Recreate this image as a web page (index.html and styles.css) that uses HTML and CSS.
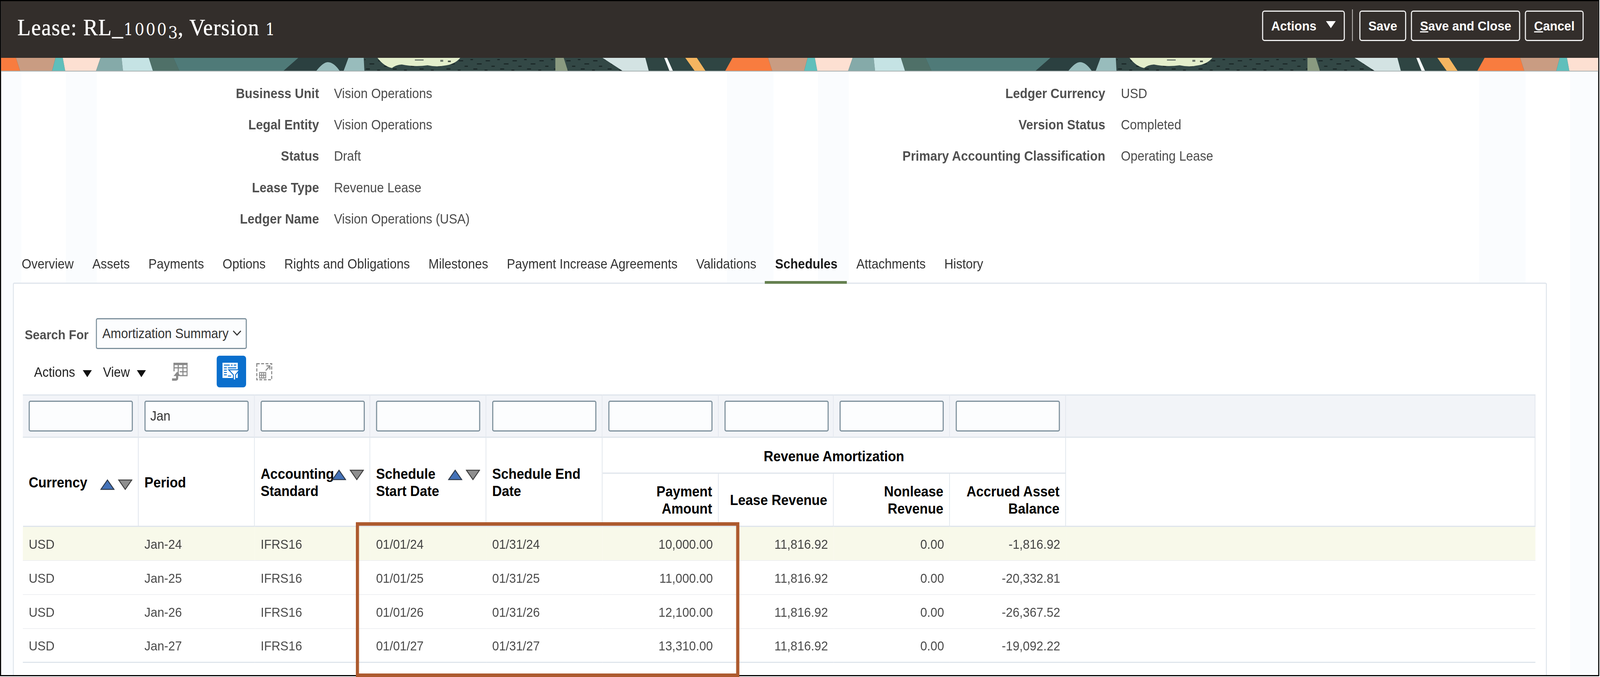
FILE: index.html
```html
<!DOCTYPE html>
<html lang="en">
<head>
<meta charset="utf-8">
<title>Lease: RL_10003, Version 1</title>
<link rel="stylesheet" href="styles.css">
</head>
<body>
<div class="page">
<div class="frame">
  <header class="topbar">
    <h1 class="title">Lease: RL_<span class="os">1000</span><span class="os low">3</span>, Version <span class="os">1</span></h1>
    <div class="topactions">
      <button class="tbtn" type="button">Actions
        <svg class="tbtn-tri" viewBox="0 0 27 18"><polygon points="0,0 27,0 13.5,18"/></svg>
      </button>
      <span class="tsep"></span>
      <button class="tbtn" type="button">Save</button>
      <button class="tbtn" type="button"><u>S</u>ave and Close</button>
      <button class="tbtn" type="button"><u>C</u>ancel</button>
    </div>
  </header>

  <svg class="banner" viewBox="3 148 4400 35" preserveAspectRatio="none">
    <defs>
      <pattern id="speck" patternUnits="userSpaceOnUse" width="74" height="35" x="0" y="148">
        <rect x="6" y="6" width="12" height="3" fill="#1b2828"/>
        <rect x="38" y="3" width="7" height="3" fill="#1b2828"/>
        <rect x="56" y="14" width="13" height="3" fill="#1b2828"/>
        <rect x="22" y="20" width="9" height="3" fill="#1b2828"/>
        <rect x="46" y="27" width="11" height="3" fill="#1b2828"/>
        <rect x="3" y="30" width="8" height="3" fill="#1b2828"/>
      </pattern>
      <g id="tile">
        <rect x="3076" y="148" width="890" height="35" fill="url(#speck)"/>
        <polygon points="2018,148 2116,148 2128,183 1997,183" fill="#f87c3f"/>
        <polygon points="2116,148 2225,148 2215,183 2128,183" fill="#c99c82"/>
        <polygon points="2225,148 2245,148 2252,183 2215,183" fill="#5fbfbb"/>
        <polygon points="2245,148 2349,148 2336,183 2252,183" fill="#fde0d2"/>
        <polygon points="2349,148 2407,148 2411,183 2336,183" fill="#85aaa9"/>
        <polygon points="2407,148 2482,148 2494,183 2411,183" fill="#c5e3e4"/>
        <polygon points="2482,148 2550,148 2567,183 2494,183" fill="#4f7068"/>
        <polygon points="2550,148 2894,148 2851,183 2567,183" fill="#4f7a78"/>
        <polygon points="2894,148 3032,148 3018,183 2851,183" fill="#2b4040"/>
        <path d="M2942 183 Q2962 159 2975 159 Q2992 159 3009 183Z" fill="#98bcbc"/>
        <polygon points="3032,148 3074,148 3076,183 3018,183" fill="#98bcbc"/>
        <path d="M3112 148 Q3130 170 3152 174 Q3162 166 3179 165 Q3215 172 3250 167 Q3275 172 3295 168 Q3325 165 3340 148Z" fill="#e3eecb"/>
        <rect x="3215" y="152" width="24" height="3" fill="#6e7a6e"/>
        <rect x="3285" y="153" width="8" height="5" fill="#6e7a6e"/>
        <rect x="3306" y="155" width="8" height="4" fill="#4d574d"/>
        <polygon points="3602,148 3625,148 3637,183 3602,183" fill="#8a9a80"/>
        <polygon points="3732,148 3850,148 3860,183 3790,183" fill="#d3e3e3"/>
        <polygon points="3850,148 3902,148 3917,183 3860,183" fill="#2f4543"/>
        <polygon points="3902,148 3910,148 3927,183 3917,183" fill="#f2f6f6"/>
        <polygon points="3910,148 3960,148 3987,183 3927,183" fill="#2f4543"/>
        <polygon points="3960,148 3992,148 4017,183 3987,183" fill="#f5b560"/>
        <polygon points="3992,148 4090,148 4069,183 4017,183" fill="#2f4543"/>
      </g>
    </defs>
    <rect x="0" y="148" width="4408" height="35" fill="#334846"/>
    <use href="#tile" x="-2072"/>
    <use href="#tile"/>
    <use href="#tile" x="2072"/>
    <rect x="0" y="181" width="4408" height="2" fill="#a9b2b2"/>
  </svg>

  <section class="details">
    <dl class="fields fields-left">
      <dt>Business Unit</dt><dd>Vision Operations</dd>
      <dt>Legal Entity</dt><dd>Vision Operations</dd>
      <dt>Status</dt><dd>Draft</dd>
      <dt>Lease Type</dt><dd>Revenue Lease</dd>
      <dt>Ledger Name</dt><dd>Vision Operations (USA)</dd>
    </dl>
    <dl class="fields fields-right">
      <dt>Ledger Currency</dt><dd>USD</dd>
      <dt>Version Status</dt><dd>Completed</dd>
      <dt>Primary Accounting Classification</dt><dd>Operating Lease</dd>
    </dl>
  </section>

  <nav class="tabs">
    <a class="tab">Overview</a>
    <a class="tab">Assets</a>
    <a class="tab">Payments</a>
    <a class="tab">Options</a>
    <a class="tab">Rights and Obligations</a>
    <a class="tab">Milestones</a>
    <a class="tab">Payment Increase Agreements</a>
    <a class="tab">Validations</a>
    <a class="tab tab-active">Schedules</a>
    <a class="tab">Attachments</a>
    <a class="tab">History</a>
  </nav>

  <main class="panel">
    <div class="searchrow">
      <span class="searchlabel">Search For</span>
      <div class="selectbox">Amortization Summary
        <svg class="chev" viewBox="0 0 24 14"><polyline points="1.5,1.5 12,12 22.5,1.5"/></svg>
      </div>
    </div>

    <div class="toolbar">
      <span class="tool-menu">Actions</span>
      <svg class="tool-tri" viewBox="0 0 25 18"><polygon points="0,0 25,0 12.5,18"/></svg>
      <span class="tool-menu tool-view">View</span>
      <svg class="tool-tri tool-tri-view" viewBox="0 0 25 18"><polygon points="0,0 25,0 12.5,18"/></svg>

      <svg class="ico-freeze" viewBox="0 0 44 46">
        <rect x="5" y="0" width="39" height="6" fill="#8a8a8a"/>
        <path d="M6.5 0V22M18 0V33M31 0V33M42.5 0V33M5 13H44M22 23H44M22 33H44" fill="none" stroke="#8a8a8a" stroke-width="3"/>
        <path d="M1 43H11Q15 43 15 39V32" fill="none" stroke="#8a8a8a" stroke-width="6"/>
        <polygon points="15,23 25,34 5,34" fill="#8a8a8a"/>
      </svg>

      <button class="filterbtn" type="button" aria-label="Query by example">
        <svg viewBox="0 0 81 81">
          <rect x="16" y="18" width="42" height="39" fill="#fff"/>
          <path d="M20 24H36M39 24H44M47 24H54M20 31H28M31 31H54M20 37H28M20 43H28M20 49H28M31 52H40" stroke="#0a6fcd" stroke-width="2.5" fill="none"/>
          <polygon points="33,36 63,36 52,49 52,62 46,62 46,49" fill="#fff" stroke="#0a6fcd" stroke-width="2.5"/>
        </svg>
      </button>

      <svg class="ico-detach" viewBox="0 0 44 44">
        <rect x="1.5" y="1.5" width="41" height="41" fill="none" stroke="#8e8e8e" stroke-width="3" stroke-dasharray="8 4"/>
        <path d="M9 24H26V38H9ZM15 24V38M20.5 24V38M9 31H26" fill="none" stroke="#8e8e8e" stroke-width="2.5"/>
        <path d="M26 19L37 8M28 7H37.5V16.5" fill="none" stroke="#8e8e8e" stroke-width="3"/>
      </svg>
    </div>

    <table class="grid">
      <colgroup>
        <col class="c319"><col class="c320"><col class="c318"><col class="c320"><col class="c320"><col class="c320"><col class="c317"><col class="c320"><col class="c320"><col>
      </colgroup>
      <thead>
        <tr class="filters">
          <td><input type="text" aria-label="Currency"></td>
          <td><input type="text" aria-label="Period" value="Jan"></td>
          <td><input type="text" aria-label="Accounting Standard"></td>
          <td><input type="text" aria-label="Schedule Start Date"></td>
          <td><input type="text" aria-label="Schedule End Date"></td>
          <td><input type="text" aria-label="Payment Amount"></td>
          <td><input type="text" aria-label="Lease Revenue"></td>
          <td><input type="text" aria-label="Nonlease Revenue"></td>
          <td><input type="text" aria-label="Accrued Asset Balance"></td>
          <td class="filler"></td>
        </tr>
        <tr class="head1">
          <th rowspan="2">Currency
            <span class="sort sort-mid">
              <svg viewBox="0 0 40 28"><polygon class="up" points="20,2 38,26 2,26"/></svg>
              <svg viewBox="0 0 40 28"><polygon class="down" points="2,2 38,2 20,26"/></svg>
            </span>
          </th>
          <th rowspan="2">Period</th>
          <th rowspan="2">Accounting<br>Standard
            <span class="sort sort-high">
              <svg viewBox="0 0 40 28"><polygon class="up" points="20,2 38,26 2,26"/></svg>
              <svg viewBox="0 0 40 28"><polygon class="down" points="2,2 38,2 20,26"/></svg>
            </span>
          </th>
          <th rowspan="2">Schedule<br>Start Date
            <span class="sort sort-high">
              <svg viewBox="0 0 40 28"><polygon class="up" points="20,2 38,26 2,26"/></svg>
              <svg viewBox="0 0 40 28"><polygon class="down" points="2,2 38,2 20,26"/></svg>
            </span>
          </th>
          <th rowspan="2">Schedule End<br>Date</th>
          <th colspan="4" class="group">Revenue Amortization</th>
          <th rowspan="2" class="filler-head"></th>
        </tr>
        <tr class="head2">
          <th class="num">Payment<br>Amount</th>
          <th class="num">Lease Revenue</th>
          <th class="num">Nonlease<br>Revenue</th>
          <th class="num">Accrued Asset<br>Balance</th>
        </tr>
      </thead>
      <tbody>
        <tr class="row-current">
          <td>USD</td><td>Jan-24</td><td>IFRS16</td><td>01/01/24</td><td>01/31/24</td>
          <td class="num">10,000.00</td><td class="num">11,816.92</td><td class="num">0.00</td><td class="num">-1,816.92</td><td></td>
        </tr>
        <tr>
          <td>USD</td><td>Jan-25</td><td>IFRS16</td><td>01/01/25</td><td>01/31/25</td>
          <td class="num">11,000.00</td><td class="num">11,816.92</td><td class="num">0.00</td><td class="num">-20,332.81</td><td></td>
        </tr>
        <tr>
          <td>USD</td><td>Jan-26</td><td>IFRS16</td><td>01/01/26</td><td>01/31/26</td>
          <td class="num">12,100.00</td><td class="num">11,816.92</td><td class="num">0.00</td><td class="num">-26,367.52</td><td></td>
        </tr>
        <tr class="row-last">
          <td>USD</td><td>Jan-27</td><td>IFRS16</td><td>01/01/27</td><td>01/31/27</td>
          <td class="num">13,310.00</td><td class="num">11,816.92</td><td class="num">0.00</td><td class="num">-19,092.22</td><td></td>
        </tr>
      </tbody>
    </table>
  </main>
</div>
<div class="callout"></div>
</div>
</body>
</html>
```

FILE: styles.css
```css
* { box-sizing: border-box; }

html, body {
  margin: 0;
  padding: 0;
  background: #fff;
  overflow: hidden;
}

body {
  width: 100vw;
  height: 1732px;
  font-family: "Liberation Sans", Arial, sans-serif;
  font-size: 34.4px;
  color: #4b4b4b;
}

.page {
  position: relative;
  width: 4408px;
  height: 1732px;
  transform-origin: 0 0;
}

@media (max-width: 4200px) {
  .page { transform: scaleX(0.92922); }
}

.frame {
  width: 4406px;
  height: 1730px;
  border: 3px solid #000;
  display: flex;
  flex-direction: column;
  background-image: linear-gradient(90deg, #fafcfe 0 56px, #fff 56px 179px, #fafcfe 179px 264px, #fff 264px 2000px, #fafcfe 2000px);
  background-size: 2072px 100%;
}

/* top bar */
.topbar {
  height: 145px;
  flex: none;
  background: #332e2b;
  display: flex;
  justify-content: space-between;
  align-items: flex-start;
  padding: 24px 40px 0 45px;
}

.title {
  margin: 8px 0 0;
  font-family: "Liberation Serif", "Times New Roman", serif;
  font-weight: 400;
  font-size: 60px;
  line-height: 70px;
  letter-spacing: 1.4px;
  color: #fff;
  -webkit-text-stroke: 0.5px #fff;
}

.os {
  font-family: "DejaVu Serif", "Liberation Serif", serif;
  font-size: 42px;
  letter-spacing: 4px;
  -webkit-text-stroke: 0;
}

.low { vertical-align: -0.2em; letter-spacing: 0; }

.topactions {
  display: flex;
  align-items: flex-start;
  gap: 13px;
}

.tbtn {
  height: 78px;
  padding: 0 22px;
  display: flex;
  align-items: center;
  background: transparent;
  border: 3px solid #f0f0f0;
  border-radius: 7px;
  color: #fff;
  font-family: inherit;
  font-weight: 700;
  font-size: 34px;
  white-space: nowrap;
}

.tbtn-tri {
  width: 27px;
  height: 18px;
  margin: -6px 0 0 26px;
  fill: #fff;
}

.tsep {
  width: 2px;
  height: 81px;
  margin: -3px 5px 0 7px;
  background: #c9c7c5;
}

/* banner */
.banner {
  display: block;
  flex: none;
  width: 100%;
  height: 35px;
}

/* details */
.details {
  flex: none;
  display: flex;
  height: 418px;
  padding-top: 16px;
}

.fields {
  margin: 0;
  display: grid;
  grid-auto-rows: 80.4px;
  align-items: center;
}

.fields dt {
  text-align: right;
  font-weight: 700;
  color: #505050;
}

.fields dd {
  margin: 0;
  color: #4b4b4b;
}

.fields-left {
  width: 2000px;
  grid-template-columns: 876px 1fr;
  column-gap: 41px;
}

.fields-right {
  grid-template-columns: 1042px 1fr;
  column-gap: 43px;
  align-self: flex-start;
}

/* tabs */
.tabs {
  flex: none;
  height: 125px;
  margin-bottom: -3px;
  padding-left: 31px;
  display: flex;
  position: relative;
  z-index: 1;
}

.tab {
  padding: 54px 25.7px 0;
  line-height: 40px;
  color: #333;
  white-space: nowrap;
}

.tab-active {
  padding-left: 28px;
  padding-right: 26px;
  margin-left: -2px;
  font-weight: 700;
  color: #1a1a1a;
  border-bottom: 7px solid #658050;
}

/* panel */
.panel {
  flex: 1;
  margin-left: 32px;
  width: 4227px;
  padding: 88px 0 0 25px;
  background: #fff;
  border: 3px solid #dfe5ec;
  border-bottom: 0;
  border-radius: 5px 5px 0 0;
}

.searchrow {
  display: flex;
  align-items: center;
  gap: 20px;
  height: 79px;
  padding-left: 5px;
}

.searchlabel {
  padding-top: 5px;
  font-weight: 700;
  color: #4f4f4f;
  font-size: 33.7px;
}

.selectbox {
  position: relative;
  width: 416px;
  height: 79px;
  padding-left: 15px;
  line-height: 73px;
  color: #333;
  background: #fcfdfe;
  border: 3px solid #7d909c;
  border-radius: 5px;
}

.chev {
  position: absolute;
  right: 12px;
  top: 28px;
  width: 24px;
  height: 14px;
  fill: none;
  stroke: #333;
  stroke-width: 3;
}

.toolbar {
  display: flex;
  align-items: center;
  height: 81px;
  margin: 17px 0 18px;
  padding-left: 31px;
}

.tool-menu { color: #1e1e1e; padding-top: 4px; }

.tool-view { margin-left: 31px; }

.tool-tri {
  width: 25px;
  height: 18px;
  margin: 10px 0 0 21px;
  fill: #111;
}

.tool-tri-view { margin-left: 19px; }

.ico-freeze {
  width: 44px;
  height: 46px;
  margin-left: 71px;
}

.filterbtn {
  width: 81px;
  height: 81px;
  margin-left: 80px;
  padding: 0;
  border: 0;
  border-radius: 8px;
  background: #0a6fcd;
}

.filterbtn svg { display: block; width: 81px; height: 81px; }

.ico-detach {
  width: 44px;
  height: 44px;
  margin-left: 28px;
}

/* table */
.grid {
  width: 4167px;
  table-layout: fixed;
  border-collapse: separate;
  border-spacing: 0;
}

.c317 { width: 317px; }
.c318 { width: 318px; }
.c319 { width: 319px; }
.c320 { width: 320px; }

.filters td {
  height: 111px;
  padding: 0 0 0 16px;
  background: #f2f4f8;
  border-top: 3px solid #dfe5ec;
  border-bottom: 3px solid #dfe5ec;
  border-right: 2px solid #e3e7ee;
}

.filters input {
  display: block;
  width: 287px;
  height: 79px;
  padding: 0 13px;
  border: 3px solid #7d909c;
  border-radius: 5px;
  background: #fcfdfe;
  font: inherit;
  color: #333;
  outline: 0;
}

.grid th {
  position: relative;
  padding: 4px 16px 0;
  text-align: left;
  font-size: 36.8px;
  font-weight: 700;
  line-height: 43.5px;
  color: #000;
  background: #fff;
  border-right: 2px solid #dfe5ec;
  border-bottom: 3px solid #dfe5ec;
}

.head1 th { height: 92px; }
.head2 th { height: 136px; }

.grid th.group { text-align: center; padding-top: 6px; }
.grid th.num { text-align: right; padding-top: 2px; }

.sort {
  position: absolute;
  right: 15px;
  display: flex;
  gap: 9px;
}

.sort svg { display: block; width: 40px; height: 28px; }

.sort-mid { top: 106px; }
.sort-high { top: 81px; }

.up { fill: #4472b8; stroke: #2f3a4a; stroke-width: 2.5; }
.down { fill: #8f8f8f; stroke: #3f3f3f; stroke-width: 2.5; }

.grid tbody td {
  height: 87px;
  padding: 3px 16px 0;
  font-size: 33.7px;
  color: #4b4b4b;
  white-space: nowrap;
  border-bottom: 2px solid #eff0f2;
}

.grid td.num { text-align: right; }

.grid tbody .row-current td {
  background: #f8f9ea;
  color: #444;
}

.grid tbody .row-last td { border-bottom: 3px solid #dfe5ec; }

/* annotation */
.callout {
  position: absolute;
  left: 980px;
  top: 1336px;
  width: 1057px;
  height: 396px;
  border: 9px solid #ad5a2e;
}
```
